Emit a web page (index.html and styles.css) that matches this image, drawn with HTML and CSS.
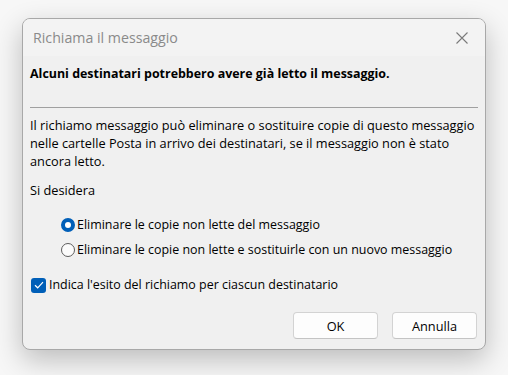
FILE: index.html
```html
<!DOCTYPE html>
<html lang="it">
<head>
    <meta charset="UTF-8">
    <title>Richiama il messaggio</title>
    <link rel="stylesheet" href="styles.css">
</head>
<body>
    <div class="dialog">
        <div class="titlebar">
            <span class="title">Richiama il messaggio</span>
            <svg class="close" width="12" height="12" viewBox="0 0 12 12">
                <path d="M0.5 0.5 L11.5 11.5 M11.5 0.5 L0.5 11.5" stroke="#7a7a7a" stroke-width="1.1" fill="none"/>
            </svg>
        </div>
        <div class="content">
            <p class="warning">Alcuni destinatari potrebbero avere già letto il messaggio.</p>
            <hr class="sep">
            <p class="info">Il richiamo messaggio può eliminare o sostituire copie di questo messaggio nelle cartelle Posta in arrivo dei destinatari, se il messaggio non è stato ancora letto.</p>
            <p class="ask">Si desidera</p>
            <div class="options">
                <label class="option">
                    <span class="radio checked"></span>
                    Eliminare le copie non lette del messaggio
                </label>
                <label class="option">
                    <span class="radio"></span>
                    Eliminare le copie non lette e sostituirle con un nuovo messaggio
                </label>
            </div>
            <label class="check-row">
                <span class="checkbox">
                    <svg width="10" height="8" viewBox="0 0 10 8">
                        <path d="M1 4.2 L3.7 6.8 L9 1.2" stroke="#fff" stroke-width="1.2" fill="none"/>
                    </svg>
                </span>
                Indica l'esito del richiamo per ciascun destinatario
            </label>
            <div class="buttons">
                <button class="btn">OK</button>
                <button class="btn">Annulla</button>
            </div>
        </div>
    </div>
</body>
</html>
```

FILE: styles.css
```css
body {
    margin: 0;
    width: 508px;
    height: 375px;
    background-color: #f7f7f7;
    font-family: "Open Sans", "Noto Sans", sans-serif;
    font-size: 12.75px;
    color: #000;
    overflow: hidden;
}
.dialog {
    margin: 18px 0 0 22px;
    width: 462px;
    height: 330px;
    background-color: #f0f0f0;
    border: 1px solid #a8a8a8;
    border-radius: 8px;
    box-shadow: 0 10px 28px rgba(0,0,0,0.24);
    overflow: hidden;
}
.titlebar {
    height: 37px;
    background-color: #f3f3f3;
    display: flex;
    align-items: center;
    justify-content: space-between;
    padding: 0 17px 0 10px;
}
.title {
    font-size: 14.2px;
    color: #8a8a8a;
}
.close {
    display: block;
}
.content {
    padding: 0 7px 0 7px;
}
.warning {
    margin: 9px 0 0 0;
    font-weight: bold;
    font-size: 12.45px;
    line-height: 18px;
}
.sep {
    margin: 24px 0 0 0;
    border: none;
    border-top: 1px solid #a0a0a0;
}
.info {
    margin: 8px 0 0 0;
    line-height: 18px;
}
.ask {
    margin: 11px 0 0 0;
    line-height: 18px;
}
.options {
    margin: 17px 0 0 31px;
    display: flex;
    flex-direction: column;
    gap: 7px;
    font-size: 12.45px;
}
.option {
    display: flex;
    align-items: center;
    gap: 2px;
    line-height: 18px;
}
.radio {
    width: 14px;
    height: 14px;
    border: 1px solid #5c5c5c;
    border-radius: 50%;
    box-sizing: border-box;
    background-color: #fbfbfb;
}
.radio.checked {
    border: 4px solid #005fb8;
    background-color: #fff;
}
.check-row {
    margin: 17px 0 0 1px;
    display: flex;
    align-items: center;
    gap: 3px;
    line-height: 18px;
    font-size: 12.45px;
}
.checkbox {
    width: 15px;
    height: 15px;
    border-radius: 3px;
    background-color: #005fb8;
    display: flex;
    align-items: center;
    justify-content: center;
}
.buttons {
    margin-top: 18px;
    display: flex;
    justify-content: flex-end;
    gap: 14px;
    padding-right: 1px;
}
.btn {
    width: 85px;
    height: 27px;
    background-color: #fdfdfd;
    border: 1px solid #d3d3d3;
    border-bottom-color: #c4c4c4;
    border-radius: 4px;
    font-family: inherit;
    font-size: 12.75px;
    color: #000;
    padding: 0;
}
```
